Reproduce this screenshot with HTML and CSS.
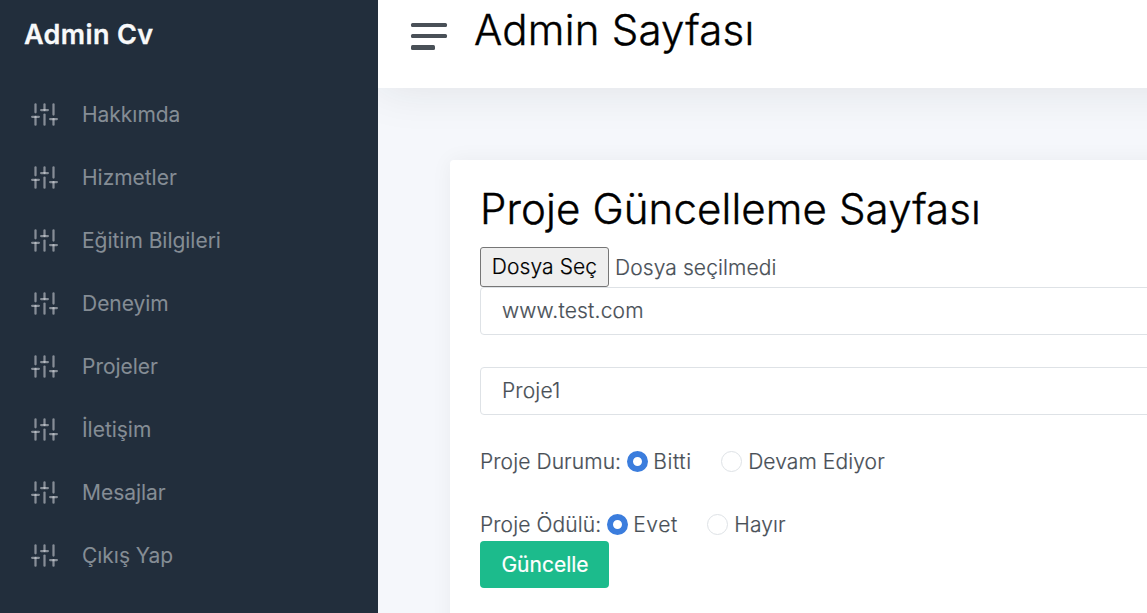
FILE: index.html
```html
<!DOCTYPE html>
<html lang="tr">
<head>
<meta charset="utf-8">
<title>Admin Cv</title>
<link rel="stylesheet" href="styles.css">
</head>
<body>
<svg class="defs" width="0" height="0" aria-hidden="true">
  <symbol id="sliders" viewBox="0 0 24 24">
    <line x1="4" y1="21" x2="4" y2="14"/><line x1="4" y1="10" x2="4" y2="3"/>
    <line x1="12" y1="21" x2="12" y2="12"/><line x1="12" y1="8" x2="12" y2="3"/>
    <line x1="20" y1="21" x2="20" y2="16"/><line x1="20" y1="12" x2="20" y2="3"/>
    <line x1="1" y1="14" x2="7" y2="14"/><line x1="9" y1="8" x2="15" y2="8"/><line x1="17" y1="16" x2="23" y2="16"/>
  </symbol>
</svg>
<div class="wrapper">
  <nav class="sidebar">
    <div class="brand">Admin Cv</div>
    <a class="link"><svg class="icon"><use href="#sliders"/></svg><span>Hakkımda</span></a>
    <a class="link"><svg class="icon"><use href="#sliders"/></svg><span>Hizmetler</span></a>
    <a class="link"><svg class="icon"><use href="#sliders"/></svg><span>Eğitim Bilgileri</span></a>
    <a class="link"><svg class="icon"><use href="#sliders"/></svg><span>Deneyim</span></a>
    <a class="link"><svg class="icon"><use href="#sliders"/></svg><span>Projeler</span></a>
    <a class="link"><svg class="icon"><use href="#sliders"/></svg><span>İletişim</span></a>
    <a class="link"><svg class="icon"><use href="#sliders"/></svg><span>Mesajlar</span></a>
    <a class="link"><svg class="icon"><use href="#sliders"/></svg><span>Çıkış Yap</span></a>
  </nav>
  <div class="main">
    <header class="navbar">
      <div class="hamburger"><i></i><i></i><i class="short"></i></div>
      <h1 class="title">Admin Sayfası</h1>
    </header>
    <main class="card">
      <h1 class="title">Proje Güncelleme Sayfası</h1>
      <div class="file"><button class="file-button" type="button">Dosya Seç</button><span class="file-name">Dosya seçilmedi</span></div>
      <input class="field" type="text" value="www.test.com">
      <input class="field second" type="text" value="Proje1">
      <div class="radios">
        <span>Proje Durumu:</span><input class="radio" type="radio" name="durum" checked><span class="option">Bitti</span>
        <input class="radio" type="radio" name="durum"><span>Devam Ediyor</span>
      </div>
      <div class="radios">
        <span>Proje Ödülü:</span><input class="radio" type="radio" name="odul" checked><span class="option">Evet</span>
        <input class="radio" type="radio" name="odul"><span>Hayır</span>
      </div>
      <button class="submit" type="button">Güncelle</button>
    </main>
  </div>
</div>
</body>
</html>
```

FILE: styles.css
```css
* { box-sizing: border-box; }
body {
  margin: 0;
  background: #f5f7fb;
  color: #495057;
  font: 300 21px/31.5px Inter, sans-serif;
  overflow: hidden;
}
.defs { display: none; }
.wrapper { display: flex; height: 613px; }
.sidebar { flex: 0 0 378px; background: #222e3c; }
.brand {
  height: 83px;
  padding: 19px 24px 0;
  color: #f8f9fa;
  font-size: 27px;
  font-weight: 600;
  letter-spacing: .36px;
  line-height: 32px;
  -webkit-text-stroke: .3px;
}
.link {
  display: flex;
  align-items: center;
  gap: 24px;
  height: 63px;
  padding-left: 31px;
  color: rgba(233, 236, 239, .5);
  font-weight: 400;
  letter-spacing: -.03px;
}
.icon {
  width: 27px;
  height: 27px;
  fill: none;
  stroke: rgba(233, 236, 239, .5);
  stroke-width: 2;
  stroke-linecap: round;
}
.main { flex: 1; min-width: 0; overflow: hidden; }
.navbar {
  display: flex;
  width: 1100px;
  height: 88px;
  padding: 0 33px;
  background: #fff;
  box-shadow: 0 0 48px rgba(33, 37, 41, .1);
}
.hamburger {
  display: flex;
  flex-direction: column;
  gap: 7px;
  width: 36px;
  margin: 23px 27px 0 0;
}
.hamburger i { height: 4px; border-radius: 1.5px; background: #495057; }
.hamburger .short { width: 24px; height: 5px; }
.title {
  margin: 0;
  color: #000;
  font-size: 42px;
  font-weight: 300;
  letter-spacing: .12px;
  line-height: 50px;
  white-space: nowrap;
  -webkit-text-stroke: .4px;
}
.navbar .title { margin-top: 5px; letter-spacing: .22px; }
.card {
  width: 1100px;
  height: 520px;
  margin: 72px 0 0 72px;
  padding: 24px 30px;
  border-radius: 4px;
  background: #fff;
  box-shadow: 0 0 21px rgba(33, 37, 41, .05);
  letter-spacing: .1px;
  -webkit-text-stroke: .2px;
}
.file { display: flex; align-items: center; gap: 6px; height: 40px; margin-top: 13px; }
.file-name { padding-top: 2px; }
.file-button {
  width: 129px;
  height: 40px;
  padding: 0;
  border: 1px solid #767676;
  border-radius: 3px;
  background: #efefef;
  color: #000;
  font: inherit;
  letter-spacing: .1px;
}
.field {
  display: block;
  width: 100%;
  height: 48px;
  padding: 0 21px 2px;
  border: 1px solid #dee2e6;
  border-radius: 4px;
  background: #fff;
  color: #495057;
  font: inherit;
  letter-spacing: .18px;
}
.second { margin-top: 32px; }
.radios { display: flex; align-items: center; height: 32px; margin-top: 31px; white-space: nowrap; }
.radio {
  flex: none;
  appearance: none;
  width: 21px;
  height: 21px;
  margin: 0 5.5px 2px;
  border: 1px solid #dee2e6;
  border-radius: 50%;
  background: #fff;
}
.radio:checked { border: 6px solid #3b7ddd; }
.option { margin-right: 23.5px; letter-spacing: .6px; }
.radio + span:last-child { margin-left: 1px; }
.submit {
  display: block;
  width: 129px;
  height: 47px;
  padding: 0 0 0 1px;
  border: 0;
  border-radius: 4px;
  background: #1cbb8c;
  color: #fff;
  font: inherit;
  font-weight: 400;
}
```
